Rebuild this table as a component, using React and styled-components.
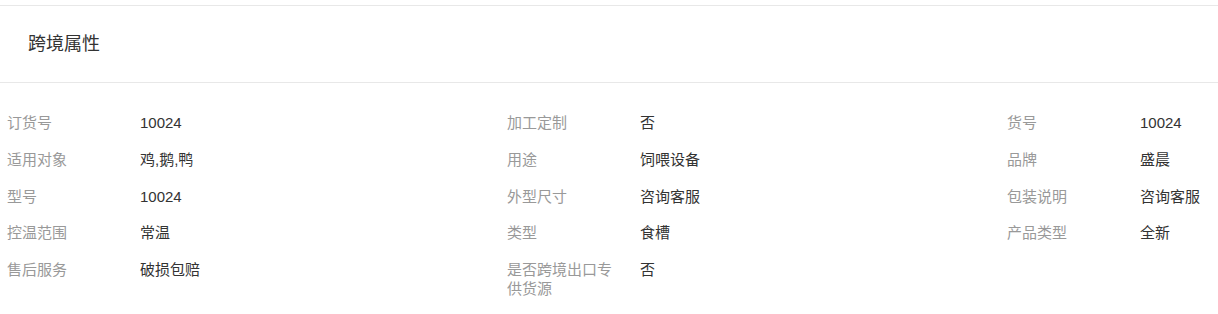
import React from 'react';
import styled, { createGlobalStyle } from 'styled-components';

const GlobalStyle = createGlobalStyle`
  body {
    margin: 0;
    background: #fff;
    font-family: "Liberation Sans", "Noto Sans CJK SC", sans-serif;
  }
`;

const attrs = [
  ['订货号', '10024'],
  ['加工定制', '否'],
  ['货号', '10024'],
  ['适用对象', '鸡,鹅,鸭'],
  ['用途', '饲喂设备'],
  ['品牌', '盛晨'],
  ['型号', '10024'],
  ['外型尺寸', '咨询客服'],
  ['包装说明', '咨询客服'],
  ['控温范围', '常温'],
  ['类型', '食槽'],
  ['产品类型', '全新'],
  ['售后服务', '破损包赔'],
  ['是否跨境出口专供货源', '否']
];

const Page = styled.div`
  padding-top: 5px;
`;

const Section = styled.section`
  border-top: 1px solid #e8e8e8;
`;

const Header = styled.div`
  display: flex;
  align-items: center;
  height: 76px;
  padding: 0 28px;
  border-bottom: 1px solid #e8e8e8;
`;

const Title = styled.h3`
  margin: 0;
  font-size: 18px;
  line-height: 22px;
  font-weight: normal;
  color: #333;
`;

const Grid = styled.div`
  display: grid;
  grid-template-columns: 500px 500px 1fr;
  row-gap: 17.8px;
  padding: 30px 0 20px 7px;
`;

const Item = styled.div`
  display: flex;
  align-items: flex-start;
  font-size: 15px;
  line-height: 19px;
`;

const Label = styled.span`
  flex: 0 0 133px;
  box-sizing: border-box;
  padding-right: 15px;
  color: #999;
`;

const Value = styled.span`
  color: #333;
  white-space: nowrap;
`;

export default function App() {
  return (
    <Page>
      <GlobalStyle />
      <Section>
        <Header>
          <Title>跨境属性</Title>
        </Header>
        <Grid>
          {attrs.map(([label, value]) => (
            <Item key={label}>
              <Label>{label}</Label>
              <Value>{value}</Value>
            </Item>
          ))}
        </Grid>
      </Section>
    </Page>
  );
}
